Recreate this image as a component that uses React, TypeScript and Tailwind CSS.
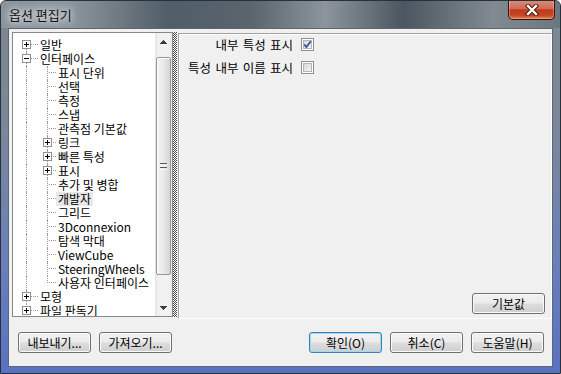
import clsx from 'clsx'

type Node = { label: string; level: 0 | 1; exp?: '+' | '-'; last?: boolean; hover?: boolean }

const tree: Node[] = [
  { label: '일반', level: 0, exp: '+' },
  { label: '인터페이스', level: 0, exp: '-' },
  { label: '표시 단위', level: 1 },
  { label: '선택', level: 1 },
  { label: '측정', level: 1 },
  { label: '스냅', level: 1 },
  { label: '관측점 기본값', level: 1 },
  { label: '링크', level: 1, exp: '+' },
  { label: '빠른 특성', level: 1, exp: '+' },
  { label: '표시', level: 1, exp: '+' },
  { label: '추가 및 병합', level: 1 },
  { label: '개발자', level: 1, hover: true },
  { label: '그리드', level: 1 },
  { label: '3Dconnexion', level: 1 },
  { label: '탐색 막대', level: 1 },
  { label: 'ViewCube', level: 1 },
  { label: 'SteeringWheels', level: 1 },
  { label: '사용자 인터페이스', level: 1, last: true },
  { label: '모형', level: 0, exp: '+' },
  { label: '파일 판독기', level: 0, exp: '+', last: true },
]

// dotted tree connectors (1px dotted border)
function VLine({ left, top = 0, height = 14 }: { left: number; top?: number; height?: number }) {
  return <div className="absolute w-0 border-l border-dotted border-[#999999]" style={{ left, top, height }} />
}

function HLine({ left, width }: { left: number; width: number }) {
  return <div className="absolute top-[6px] h-0 border-t border-dotted border-[#999999]" style={{ left, width }} />
}

function Expander({ left, sign }: { left: number; sign: '+' | '-' }) {
  return (
    <svg width={9} height={9} className="absolute top-[2px]" style={{ left }} shapeRendering="crispEdges">
      <rect x={0.5} y={0.5} width={8} height={8} fill="#fff" stroke="#919191" />
      <line x1={2} x2={7} y1={4.5} y2={4.5} stroke="#000" />
      {sign === '+' && <line x1={4.5} x2={4.5} y1={2} y2={7} stroke="#000" />}
    </svg>
  )
}

function TreeRow({ item, index }: { item: Node; index: number }) {
  const w = item.level === 0 ? 25 : 43
  return (
    <div className="flex h-[14px] items-center">
      <div className="relative h-[14px] shrink-0" style={{ width: w }}>
        {item.level === 0 ? (
          <>
            <VLine left={13} top={index === 0 ? 6 : 0} height={item.last ? 7 : index === 0 ? 8 : 14} />
            <HLine left={15} width={10} />
            {item.exp && <Expander left={9} sign={item.exp} />}
          </>
        ) : (
          <>
            <VLine left={13} />
            <VLine left={34} height={item.last ? 7 : 14} />
            <HLine left={36} width={7} />
            {item.exp && <Expander left={30} sign={item.exp} />}
          </>
        )}
      </div>
      <span className={clsx('whitespace-nowrap px-[2px] leading-[14px]', item.hover && 'bg-[#e8e8e8]')}>
        {item.label}
      </span>
    </div>
  )
}

function Arrow({ down }: { down?: boolean }) {
  return (
    <svg width={7} height={4} shapeRendering="crispEdges">
      <polygon points={down ? '0,0 7,0 3.5,4' : '3.5,0 7,4 0,4'} fill="#3c3c3c" />
    </svg>
  )
}

function Scrollbar() {
  return (
    <div className="flex w-[17px] shrink-0 flex-col bg-[linear-gradient(90deg,#e4e4e4,#f1f1f1_20%,#f3f3f3_80%,#e9e9e9)]">
      <div className="flex h-[17px] items-center justify-center">
        <Arrow />
      </div>
      <div className="mx-[1px] mt-[7px] flex h-[218px] items-center justify-center rounded-[2px] border border-[#979797] bg-[linear-gradient(90deg,#f5f5f5,#e9e9e9_50%,#d5d5d5)] shadow-[inset_1px_1px_0_#fff]">
        <svg width={7} height={7} shapeRendering="crispEdges">
          {[0, 2, 4, 6].map((y) => (
            <line key={y} x1={0} x2={7} y1={y + 0.5} y2={y + 0.5} stroke={y % 4 === 0 ? '#5a5a5a' : '#f8f8f8'} />
          ))}
        </svg>
      </div>
      <div className="flex-1" />
      <div className="flex h-[17px] items-center justify-center">
        <Arrow down />
      </div>
    </div>
  )
}

function Check({ checked }: { checked?: boolean }) {
  return (
    <svg width={13} height={13} shapeRendering="crispEdges">
      <defs>
        <linearGradient id="cbg" x1="0" y1="0" x2="1" y2="1">
          <stop offset="0" stopColor="#d2d5da" />
          <stop offset="1" stopColor="#f7f7f7" />
        </linearGradient>
      </defs>
      <rect x={0.5} y={0.5} width={12} height={12} fill="#fff" stroke="#8e8f8f" />
      <rect x={2.5} y={2.5} width={8} height={8} fill="url(#cbg)" stroke="#b2b6bb" />
      {checked && (
        <path
          d="M3.2 6.4 L5.4 9 L9.8 3.2"
          fill="none"
          stroke="#3f5595"
          strokeWidth={1.9}
          shapeRendering="geometricPrecision"
        />
      )}
    </svg>
  )
}

function Btn({ children, primary }: { children: React.ReactNode; primary?: boolean }) {
  return (
    <button
      className={clsx(
        'flex h-[21px] w-[73px] items-center justify-center rounded-[3px] border text-[12px] leading-none text-black',
        'bg-[linear-gradient(180deg,#f2f2f2_0%,#ebebeb_48%,#dddddd_52%,#cfcfcf_100%)]',
        primary
          ? 'border-[#3c7fb1] shadow-[inset_0_0_0_1px_#9fd9f3]'
          : 'border-[#707070] shadow-[inset_0_0_0_1px_#fbfbfb]'
      )}
    >
      {children}
    </button>
  )
}

export default function App() {
  return (
    <div className="h-[374px] w-[561px] bg-white text-[12px] text-black [font-family:'Noto_Sans_CJK_KR','Noto_Sans',sans-serif]">
      <div className="flex h-full w-full flex-col overflow-hidden rounded-t-[6px] border border-[#27313a] bg-[linear-gradient(180deg,#7d878f_0%,#7b879a_35%,#6a7fbb_70%,#5a71c3_100%)]">
        {/* Title bar */}
        <div className="flex h-[27px] shrink-0 items-start justify-between bg-[linear-gradient(90deg,#8a959e_0%,#8d979f_12%,#515d67_30%,#5a656e_45%,#8c959c_58%,#4b5660_72%,#818a91_88%,#6c767e_100%)] pl-[8px] pr-[5px]">
          <span className="mt-[6px] text-[13px] leading-[15px] text-[#141414] [text-shadow:0_0_6px_#fff,0_0_10px_rgba(255,255,255,0.8)]">
            옵션 편집기
          </span>
          <div className="-mt-px flex h-[20px] w-[47px] items-center justify-center rounded-b-[5px] border border-t-0 border-[#3d0f08] bg-[linear-gradient(180deg,#dc8f7d_0%,#d06a55_45%,#bf3a1e_52%,#c4441f_80%,#e0875c_100%)] shadow-[inset_0_0_0_1px_rgba(255,220,210,0.35)]">
            <svg width={14} height={12}>
              <path d="M3 2 L11 10 M11 2 L3 10" stroke="#4a150b" strokeWidth={4.4} strokeLinecap="square" />
              <path d="M3 2 L11 10 M11 2 L3 10" stroke="#fff" strokeWidth={2.4} strokeLinecap="square" />
            </svg>
          </div>
        </div>

        {/* Client area */}
        <div className="mx-[7px] mb-[6px] flex flex-1 flex-col border border-[#5d6770] bg-[#f0f0f0]">
          <div className="flex items-start pl-[3px] pt-[3px]">
            {/* Tree */}
            <div className="flex h-[285px] w-[161px] shrink-0 border border-[#828790] bg-white">
              <div className="flex-1 overflow-hidden pt-[5px]">
                {tree.map((item, i) => (
                  <TreeRow key={item.label + i} item={item} index={i} />
                ))}
              </div>
              <Scrollbar />
            </div>

            {/* Splitter */}
            <div className="h-[285px] w-[5px] shrink-0">
              <div className="h-full w-[4px] bg-[repeating-conic-gradient(#4a4a4a_0%_25%,#ffffff_0%_50%)] bg-[length:2px_2px]" />
            </div>

            {/* Settings panel */}
            <div className="mt-[1px] flex h-[286px] flex-1 flex-col border border-b-white border-l-[#a0a0a0] border-r-white border-t-[#a0a0a0] shadow-[inset_1px_1px_0_#fff]">
              <div className="grid grid-cols-[114px_13px] items-center gap-x-[8px] gap-y-[10px] pt-[4px] text-[12.5px] [word-spacing:1.5px]">
                <span className="justify-self-end whitespace-nowrap leading-[13px]">내부 특성 표시</span>
                <Check checked />
                <span className="justify-self-end whitespace-nowrap leading-[13px]">특성 내부 이름 표시</span>
                <Check />
              </div>
              <div className="mt-auto mb-[4px] mr-[6px] self-end">
                <Btn>기본값</Btn>
              </div>
            </div>
          </div>

          {/* Bottom buttons */}
          <div className="mt-[13px] flex justify-between pl-[9px] pr-[8px]">
            <div className="flex gap-[8px]">
              <Btn>내보내기...</Btn>
              <Btn>가져오기...</Btn>
            </div>
            <div className="flex gap-[8px]">
              <Btn primary>확인(O)</Btn>
              <Btn>취소(C)</Btn>
              <Btn>도움말(H)</Btn>
            </div>
          </div>
        </div>
      </div>
    </div>
  )
}
